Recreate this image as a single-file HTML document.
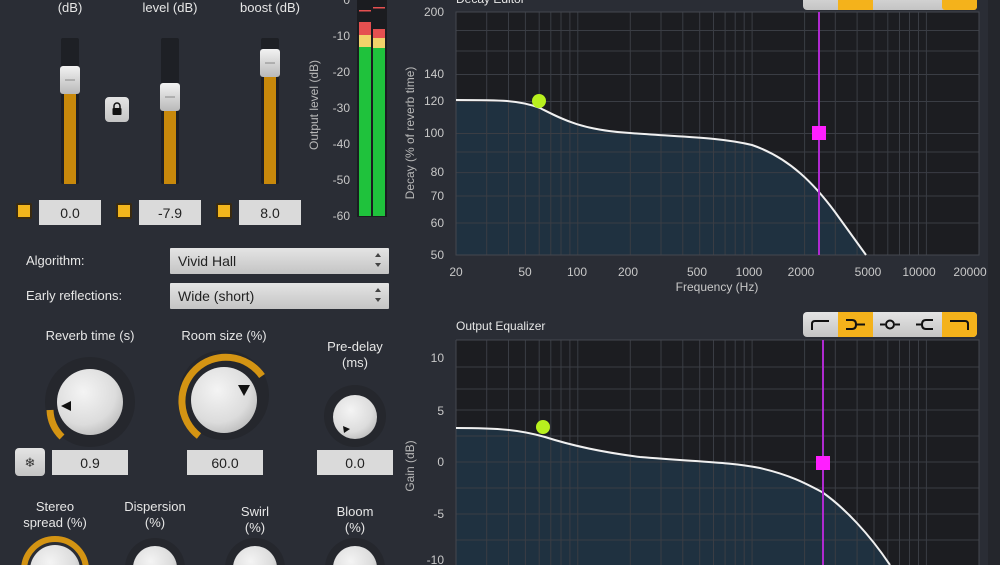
<!DOCTYPE html>
<html><head><meta charset="utf-8"><style>
html,body{margin:0;padding:0;background:#2a2d35;width:1000px;height:565px;overflow:hidden}
svg{display:block;overflow:hidden}
text{font-family:"Liberation Sans",sans-serif}
</style></head><body>
<svg width="1000" height="565" viewBox="0 0 1000 565" xmlns="http://www.w3.org/2000/svg">
<defs>
<radialGradient id="kn" cx="40%" cy="35%" r="70%"><stop offset="0" stop-color="#f4f4f4"/><stop offset="0.7" stop-color="#dcdcdc"/><stop offset="1" stop-color="#bdbdbd"/></radialGradient>
<linearGradient id="hd" x1="0" y1="0" x2="0" y2="1"><stop offset="0" stop-color="#f2f2f2"/><stop offset="1" stop-color="#b9b9b9"/></linearGradient>
<linearGradient id="bg" x1="0" y1="0" x2="0" y2="1"><stop offset="0" stop-color="#e4e4e4"/><stop offset="1" stop-color="#c4c4c4"/></linearGradient>
<clipPath id="cp"><rect width="1000" height="565"/></clipPath>
</defs>
<g clip-path="url(#cp)">
<rect width="1000" height="565" fill="#2a2d35"/>
<rect x="988" y="0" width="12" height="565" fill="#24262c"/>

<g fill="#e6e6e6" font-size="13" text-anchor="middle">
<text x="70" y="12">(dB)</text><text x="170" y="12">level (dB)</text><text x="270" y="12">boost (dB)</text>
</g>
<g>
<rect x="61" y="38" width="18" height="146" rx="2" fill="#1e2025"/>
<rect x="64" y="92" width="12" height="92" fill="#c8890b"/>
<rect x="60" y="66" width="20" height="28" rx="3" fill="url(#hd)"/><line x1="65" y1="80" x2="75" y2="80" stroke="#888"/>
<rect x="161" y="38" width="18" height="146" rx="2" fill="#1e2025"/>
<rect x="164" y="108" width="12" height="76" fill="#c8890b"/>
<rect x="160" y="83" width="20" height="28" rx="3" fill="url(#hd)"/><line x1="165" y1="97" x2="175" y2="97" stroke="#888"/>
<rect x="261" y="38" width="18" height="146" rx="2" fill="#1e2025"/>
<rect x="264" y="74" width="12" height="110" fill="#c8890b"/>
<rect x="260" y="49" width="20" height="28" rx="3" fill="url(#hd)"/><line x1="265" y1="63" x2="275" y2="63" stroke="#888"/>
<rect x="105" y="97" width="24" height="25" rx="4" fill="url(#bg)"/>
<rect x="112.5" y="108" width="9" height="7" rx="1" fill="#111"/><path d="M114 108v-2a3 3 0 0 1 6 0v2" stroke="#111" stroke-width="1.5" fill="none"/>
</g>
<g>
<rect x="16" y="203" width="16" height="16" rx="2" fill="#3a2a10"/><rect x="18" y="205" width="12" height="12" fill="#f2b51c"/>
<rect x="116" y="203" width="16" height="16" rx="2" fill="#3a2a10"/><rect x="118" y="205" width="12" height="12" fill="#f2b51c"/>
<rect x="216" y="203" width="16" height="16" rx="2" fill="#3a2a10"/><rect x="218" y="205" width="12" height="12" fill="#f2b51c"/>
<rect x="39" y="200" width="62" height="25" fill="#dadada"/><rect x="139" y="200" width="62" height="25" fill="#dadada"/><rect x="239" y="200" width="62" height="25" fill="#dadada"/>
<g font-size="14" fill="#222" text-anchor="middle"><text x="70" y="218">0.0</text><text x="170" y="218">-7.9</text><text x="270" y="218">8.0</text></g>
</g>
<g>
<rect x="357" y="0" width="30" height="217" fill="#1b1c20"/>
<rect x="359" y="22" width="12" height="194" fill="#1fc23c"/><rect x="373" y="29" width="12" height="187" fill="#1fc23c"/>
<rect x="359" y="22" width="12" height="13" fill="#e55050"/><rect x="359" y="35" width="12" height="12" fill="#f1d36a"/>
<rect x="373" y="29" width="12" height="9" fill="#e55050"/><rect x="373" y="38" width="12" height="10" fill="#f1d36a"/>
<rect x="359" y="10" width="12" height="1.5" fill="#e55050"/><rect x="373" y="7" width="12" height="1.5" fill="#e55050"/>
<g font-size="12" fill="#c8c8c8" text-anchor="end">
<text x="350" y="4">0</text><text x="350" y="40">-10</text><text x="350" y="76">-20</text><text x="350" y="112">-30</text><text x="350" y="148">-40</text><text x="350" y="184">-50</text><text x="350" y="220">-60</text>
</g>
<text transform="translate(318,105) rotate(-90)" font-size="12" fill="#b8b8b8" text-anchor="middle">Output level (dB)</text>
</g>

<g>
<text x="26" y="265" font-size="13" fill="#e6e6e6">Algorithm:</text>
<text x="26" y="300" font-size="13" fill="#e6e6e6">Early reflections:</text>
<rect x="170" y="248" width="219" height="26" rx="1" fill="url(#bg)"/>
<rect x="170" y="283" width="219" height="26" rx="1" fill="url(#bg)"/>
<text x="178" y="266" font-size="14" fill="#222">Vivid Hall</text>
<text x="178" y="301" font-size="14" fill="#222">Wide (short)</text>
<path d="M375 257l3-4 3 4zM375 263l3 4 3-4zM375 292l3-4 3 4zM375 298l3 4 3-4z" fill="#444"/>
</g>

<g font-size="13" fill="#e6e6e6" text-anchor="middle">
<text x="90" y="340">Reverb time (s)</text><text x="224" y="340">Room size (%)</text>
<text x="355" y="351">Pre-delay</text><text x="355" y="367">(ms)</text>
</g>
<circle cx="90" cy="402" r="45" fill="#25272d"/>
<path d="M62 437 A40 40 0 0 1 50 410" stroke="#d49413" stroke-width="7" fill="none"/>
<circle cx="90" cy="402" r="33" fill="url(#kn)"/>
<path d="M61 406l10-5v10z" fill="#111"/>
<circle cx="224" cy="395" r="45" fill="#25272d"/>
<path d="M199 436 A44 44 0 1 1 262 376" stroke="#d49413" stroke-width="7" fill="none"/>
<circle cx="224" cy="400" r="33" fill="url(#kn)"/>
<path d="M238 385h12l-6 11z" fill="#111"/>
<circle cx="355" cy="416" r="31" fill="#25272d"/>
<circle cx="355" cy="417" r="22" fill="url(#kn)"/>
<path d="M343 426l7 3-6 4z" fill="#111"/>
<rect x="15" y="448" width="30" height="28" rx="4" fill="url(#bg)"/>
<text x="30" y="467" font-size="13" fill="#333" text-anchor="middle">❄</text>
<rect x="52" y="450" width="76" height="25" fill="#dadada"/><rect x="187" y="450" width="76" height="25" fill="#dadada"/><rect x="317" y="450" width="76" height="25" fill="#dadada"/>
<g font-size="14" fill="#222" text-anchor="middle"><text x="90" y="468">0.9</text><text x="225" y="468">60.0</text><text x="355" y="468">0.0</text></g>

<g font-size="13" fill="#e6e6e6" text-anchor="middle">
<text x="55" y="511">Stereo</text><text x="55" y="527">spread (%)</text>
<text x="155" y="511">Dispersion</text><text x="155" y="527">(%)</text>
<text x="255" y="516">Swirl</text><text x="255" y="532">(%)</text>
<text x="355" y="516">Bloom</text><text x="355" y="532">(%)</text>
</g>
<circle cx="55" cy="570" r="31" fill="none" stroke="#d49413" stroke-width="6"/>
<circle cx="55" cy="570" r="25" fill="url(#kn)"/>
<circle cx="155" cy="568" r="30" fill="#25272d"/><circle cx="155" cy="568" r="22" fill="url(#kn)"/>
<circle cx="255" cy="568" r="30" fill="#25272d"/><circle cx="255" cy="568" r="22" fill="url(#kn)"/>
<circle cx="355" cy="568" r="30" fill="#25272d"/><circle cx="355" cy="568" r="22" fill="url(#kn)"/>

<text x="456" y="3" font-size="12" fill="#e6e6e6">Decay Editor</text>
<rect x="456" y="12" width="523" height="243" fill="#1c1d21"/>
<path d="M456 100 C500 100,520 100,540 108 C560 118,580 130,630 133 C680 137,720 137,752 145 C790 158,815 185,835 212 L866 255 L456 255Z" fill="#1f3140"/>
<g stroke="#3a3d44" stroke-width="1">
<path d="M486.7 12V255M508.5 12V255M525.4 12V255M539.2 12V255M550.8 12V255M561 12V255M569.9 12V255M577.8 12V255M630.3 12V255M661 12V255M682.8 12V255M699.7 12V255M713.5 12V255M725.1 12V255M735.2 12V255M744.2 12V255M752.1 12V255M804.6 12V255M835.3 12V255M857.1 12V255M874 12V255M887.8 12V255M899.5 12V255M909.5 12V255M918.5 12V255M926.4 12V255"/>
<path d="M456 30.5H979M456 51H979M456 74.5H979M456 101.5H979M456 133.5H979M456 152H979M456 172.6H979M456 196H979M456 223H979"/>
</g>
<rect x="456" y="12" width="523" height="243" fill="none" stroke="#44474e"/>
<path d="M456 100 C500 100,520 100,540 108 C560 118,580 130,630 133 C680 137,720 137,752 145 C790 158,815 185,835 212 L866 255" stroke="#f0f0f0" stroke-width="2" fill="none"/>
<line x1="819" y1="12" x2="819" y2="255" stroke="#b02ad0" stroke-width="2"/>
<rect x="812" y="126" width="14" height="14" fill="#ff1fff"/>
<circle cx="539" cy="101" r="7" fill="#b8f01e"/>
<g font-size="12" fill="#c8c8c8" text-anchor="end">
<text x="444" y="16">200</text><text x="444" y="78">140</text><text x="444" y="105">120</text><text x="444" y="137">100</text><text x="444" y="176">80</text><text x="444" y="200">70</text><text x="444" y="227">60</text><text x="444" y="259">50</text>
</g>
<g font-size="12" fill="#c8c8c8" text-anchor="middle">
<text x="456" y="276">20</text><text x="525" y="276">50</text><text x="577" y="276">100</text><text x="628" y="276">200</text><text x="697" y="276">500</text><text x="749" y="276">1000</text><text x="801" y="276">2000</text><text x="868" y="276">5000</text><text x="919" y="276">10000</text><text x="970" y="276">20000</text>
<text x="717" y="291">Frequency (Hz)</text>
</g>
<text transform="translate(414,133) rotate(-90)" font-size="12" fill="#b8b8b8" text-anchor="middle">Decay (% of reverb time)</text>

<g>
<rect x="803" y="-14" width="174" height="24" rx="4" fill="url(#bg)"/>
<rect x="838" y="-14" width="35" height="24" fill="#f4b21b"/><rect x="942" y="-14" width="35" height="24" rx="3" fill="#f4b21b"/>
</g>

<text x="456" y="330" font-size="12" fill="#e6e6e6">Output Equalizer</text>
<g>
<rect x="803" y="312" width="174" height="25" rx="4" fill="url(#bg)"/>
<rect x="838" y="312" width="35" height="25" fill="#f4b21b"/><rect x="942" y="312" width="35" height="25" rx="4" fill="#f4b21b"/>
<rect x="942" y="312" width="6" height="25" fill="#f4b21b"/>
<g stroke="#111" stroke-width="2" fill="none">
<path d="M812 330v-6q0-3 3-3h14"/>
<path d="M846 320h6q4 0 4 4.5t-4 4.5h-6M856 324.5h9"/>
<path d="M880 324.5h5M895 324.5h5"/><circle cx="890" cy="324.5" r="4"/>
<path d="M916 324.5h6M933 320h-7q-4 0-4 4.5t4 4.5h7"/>
<path d="M950 321h15q3 0 3 3v6"/>
</g>
</g>
<rect x="456" y="340" width="523" height="225" fill="#1c1d21"/>
<path d="M456 428 C500 428,520 430,545 437 C570 445,600 452,640 457 C700 462,730 462,760 468 C790 475,805 483,822 492 C845 508,870 535,890 565 L456 565Z" fill="#1f3140"/>
<g stroke="#3a3d44" stroke-width="1">
<path d="M486.7 340V565M508.5 340V565M525.4 340V565M539.2 340V565M550.8 340V565M561 340V565M569.9 340V565M577.8 340V565M630.3 340V565M661 340V565M682.8 340V565M699.7 340V565M713.5 340V565M725.1 340V565M735.2 340V565M744.2 340V565M752.1 340V565M804.6 340V565M835.3 340V565M857.1 340V565M874 340V565M887.8 340V565M899.5 340V565M909.5 340V565M918.5 340V565M926.4 340V565"/>
<path d="M456 367H979M456 389H979M456 410H979M456 436H979M456 462H979M456 488H979M456 514H979M456 540H979"/>
</g>
<path d="M456 340H979V565M456 340V565" stroke="#44474e" fill="none"/>
<path d="M456 428 C500 428,520 430,545 437 C570 445,600 452,640 457 C700 462,730 462,760 468 C790 475,805 483,822 492 C845 508,870 535,890 565" stroke="#f0f0f0" stroke-width="2" fill="none"/>
<line x1="823" y1="340" x2="823" y2="565" stroke="#b02ad0" stroke-width="2"/>
<rect x="816" y="456" width="14" height="14" fill="#ff1fff"/>
<circle cx="543" cy="427" r="7" fill="#b8f01e"/>
<g font-size="12" fill="#c8c8c8" text-anchor="end">
<text x="444" y="362">10</text><text x="444" y="415">5</text><text x="444" y="466">0</text><text x="444" y="518">-5</text><text x="444" y="564">-10</text>
</g>
<text transform="translate(414,466) rotate(-90)" font-size="12" fill="#b8b8b8" text-anchor="middle">Gain (dB)</text>
</g>
</svg>
</body></html>
